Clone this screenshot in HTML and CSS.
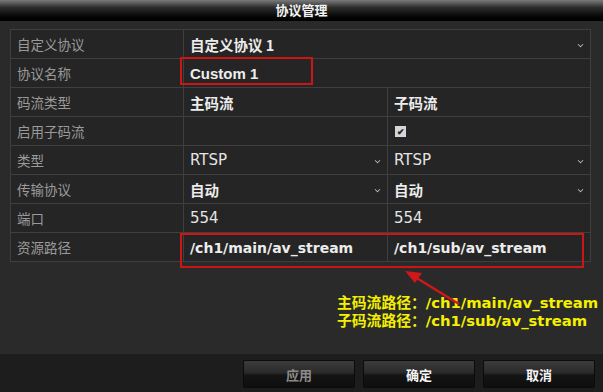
FILE: index.html
```html
<!DOCTYPE html>
<html lang="zh-CN">
<head>
  <meta charset="UTF-8" />
  <title>协议管理</title>
  <link rel="stylesheet" href="styles.css">
</head>
<body>
  <div class="window">
    <div class="titlebar">协议管理</div>

    <div class="content">
      <div class="grid">
        <div class="cell label">自定义协议</div>
        <div class="cell value span2">自定义协议 1<span class="chev"></span></div>

        <div class="cell label">协议名称</div>
        <div class="cell value span2 name">Custom 1</div>

        <div class="cell label">码流类型</div>
        <div class="cell value">主码流</div>
        <div class="cell value">子码流</div>

        <div class="cell label">启用子码流</div>
        <div class="cell value"></div>
        <div class="cell value"><span class="check">&#10004;</span></div>

        <div class="cell label">类型</div>
        <div class="cell value latin">RTSP<span class="chev"></span></div>
        <div class="cell value latin">RTSP<span class="chev"></span></div>

        <div class="cell label">传输协议</div>
        <div class="cell value">自动<span class="chev"></span></div>
        <div class="cell value">自动<span class="chev"></span></div>

        <div class="cell label">端口</div>
        <div class="cell value latin">554</div>
        <div class="cell value latin">554</div>

        <div class="cell label">资源路径</div>
        <div class="cell value path">/ch1/main/av_stream</div>
        <div class="cell value path">/ch1/sub/av_stream</div>
      </div>

      <div class="mark mark-name"></div>
      <div class="mark mark-path"></div>
      <svg class="arrow" width="60" height="40" viewBox="0 0 60 40">
        <line x1="56" y1="36" x2="12" y2="9" stroke="#d01818" stroke-width="2.5" />
        <polygon points="2,3 19,5 12,15" fill="#d01818" />
      </svg>

      <div class="note">
        <div>主码流路径：/ch1/main/av_stream</div>
        <div>子码流路径：/ch1/sub/av_stream</div>
      </div>
    </div>

    <div class="footer">
      <button class="btn disabled">应用</button>
      <button class="btn">确定</button>
      <button class="btn">取消</button>
    </div>
  </div>
</body>
</html>
```

FILE: styles.css
```css
body {
  margin: 0;
  background-color: #2a2a2a;
  font-family: "Liberation Sans", "Noto Sans CJK SC", sans-serif;
}

.window {
  width: 603px;
  height: 392px;
  display: flex;
  flex-direction: column;
  background-color: #2a2a2a;
  overflow: hidden;
}

.titlebar {
  height: 21px;
  line-height: 20px;
  text-align: center;
  color: #f2f2f2;
  font-family: "Noto Sans CJK SC", sans-serif;
  font-weight: bold;
  font-size: 13px;
  background: linear-gradient(#7a7a7a 0%, #2e2e2e 35%, #050505 80%, #000 100%);
}

.content {
  position: relative;
  flex: 1;
  padding: 8px 12px 0 10px;
}

.grid {
  display: grid;
  grid-template-columns: 172px 203px 202px;
  grid-auto-rows: 28px;
  gap: 1px;
  background-color: #3f3f3f;
  border: 1px solid #3f3f3f;
  width: 579px;
}

.cell {
  position: relative;
  display: flex;
  align-items: center;
  background-color: #252525;
  padding-left: 6px;
  font-size: 13.5px;
  font-family: "Noto Sans CJK SC", sans-serif;
}

.span2 {
  grid-column: span 2;
}

.label {
  color: #9a9a9a;
}

.value {
  color: #ececec;
  font-weight: bold;
  font-size: 14.5px;
}

.latin {
  font-family: "DejaVu Sans", sans-serif;
  font-size: 15px;
  font-weight: normal;
  color: #e4e4e4;
}

.name {
  font-family: "Liberation Sans", sans-serif;
  font-size: 15px;
  color: #eeeeee;
}

.path {
  font-family: "DejaVu Sans", sans-serif;
  font-size: 14px;
  padding-top: 1px;
}

.chev {
  position: absolute;
  right: 7px;
  top: 12px;
  width: 4px;
  height: 4px;
  border-right: 1.5px solid #cfcfcf;
  border-bottom: 1.5px solid #cfcfcf;
  transform: rotate(45deg) scale(0.8);
}

.check {
  display: inline-flex;
  align-items: center;
  justify-content: center;
  width: 11px;
  height: 11px;
  margin-left: 1px;
  background-color: #d6d6d6;
  color: #222;
  font-size: 9px;
  line-height: 1;
}

.mark {
  position: absolute;
  border: 2px solid #cc1616;
  box-sizing: border-box;
}

.mark-name {
  left: 180px;
  top: 36px;
  width: 133px;
  height: 28px;
}

.mark-path {
  left: 180px;
  top: 212px;
  width: 404px;
  height: 35px;
}

.arrow {
  position: absolute;
  left: 403px;
  top: 247px;
}

.note {
  margin: 32px 0 0 327px;
  color: #f4f000;
  font-family: "DejaVu Sans", "Noto Sans CJK SC", sans-serif;
  font-weight: bold;
  font-size: 14.8px;
  line-height: 18px;
  white-space: nowrap;
}

.footer {
  height: 38px;
  box-sizing: border-box;
  display: flex;
  justify-content: flex-end;
  gap: 8px;
  padding: 6px 8px 4px 0;
  background-color: #1d1d1d;
}

.btn {
  width: 112px;
  height: 28px;
  border: 1px solid #0c0c0c;
  border-radius: 2px;
  background: linear-gradient(#3c3c3c 0%, #2a2a2a 45%, #141414 55%, #0e0e0e 100%);
  color: #f4f4f4;
  font-family: "Noto Sans CJK SC", sans-serif;
  font-weight: bold;
  font-size: 13px;
}

.btn.disabled {
  color: #8a8a8a;
}
```
